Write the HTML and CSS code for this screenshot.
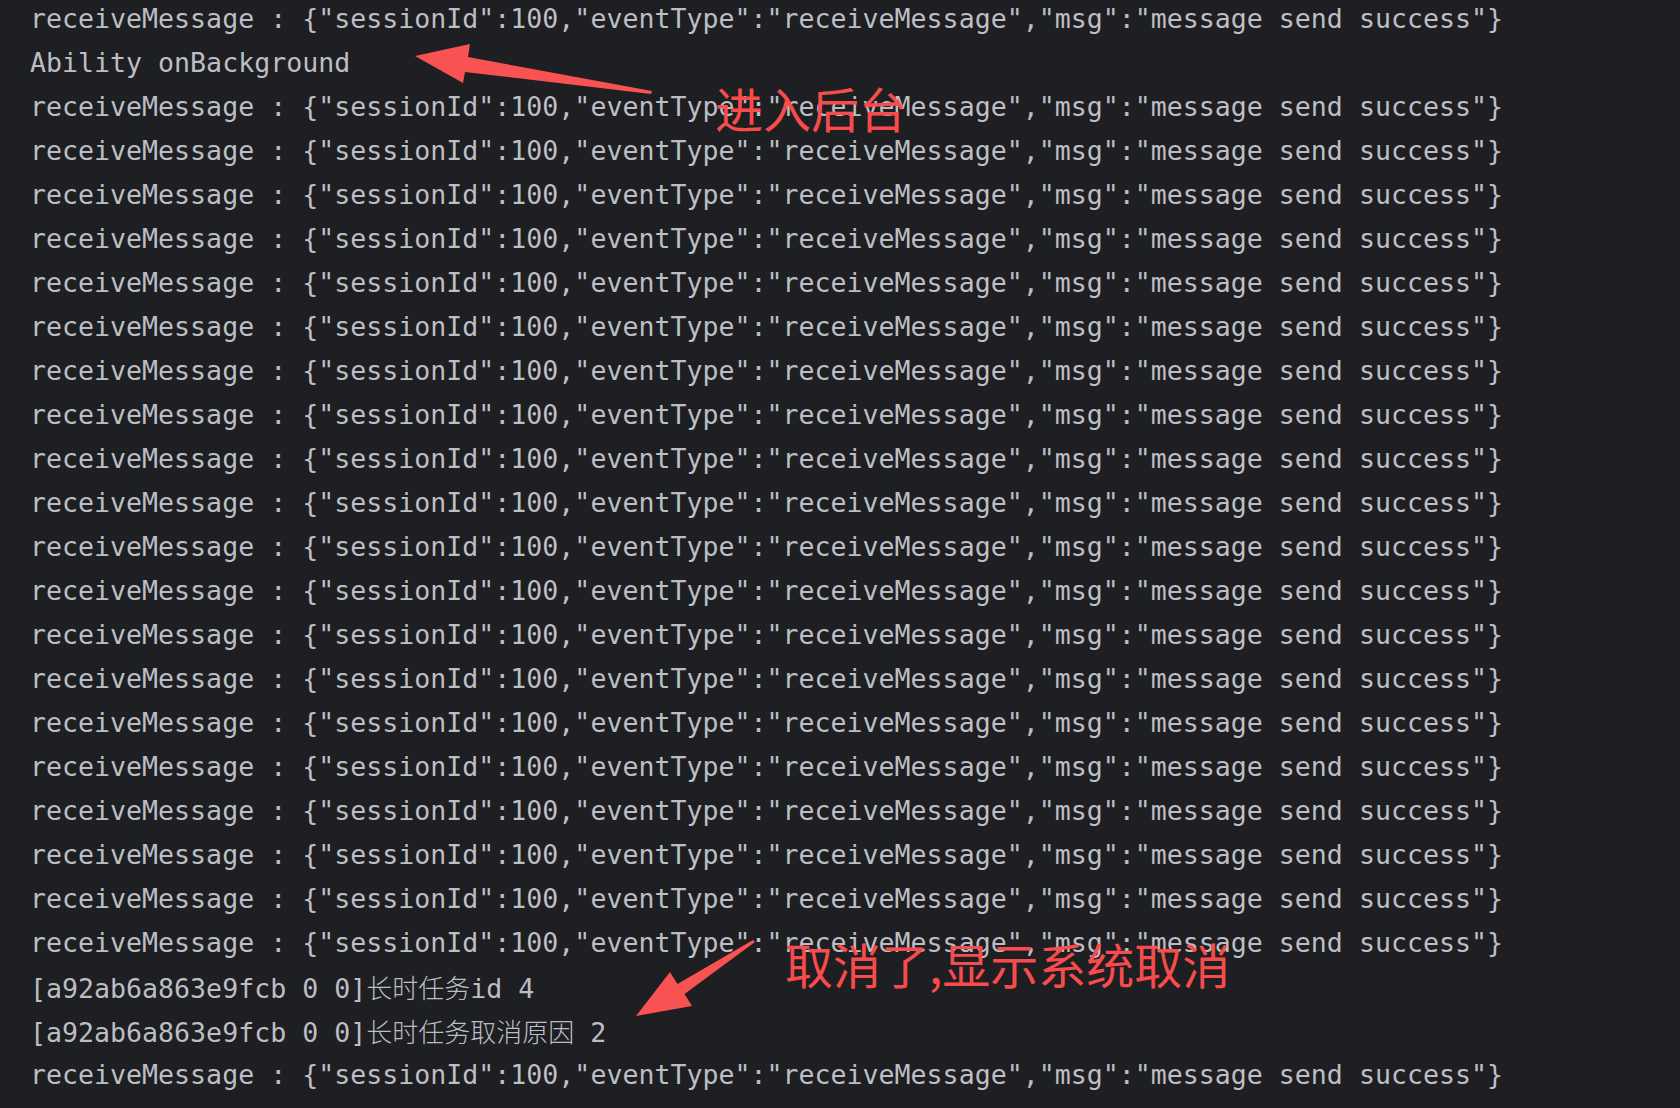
FILE: index.html
```html
<!DOCTYPE html>
<html lang="zh-CN">
<head>
<meta charset="utf-8">
<title>Log</title>
<link rel="stylesheet" href="styles.css">
</head>
<body>
<div class="console">
  <div class="log">
    <div class="line">receiveMessage : {"sessionId":100,"eventType":"receiveMessage","msg":"message send success"}</div>
    <div class="line">Ability onBackground</div>
    <div class="line">receiveMessage : {"sessionId":100,"eventType":"receiveMessage","msg":"message send success"}</div>
    <div class="line">receiveMessage : {"sessionId":100,"eventType":"receiveMessage","msg":"message send success"}</div>
    <div class="line">receiveMessage : {"sessionId":100,"eventType":"receiveMessage","msg":"message send success"}</div>
    <div class="line">receiveMessage : {"sessionId":100,"eventType":"receiveMessage","msg":"message send success"}</div>
    <div class="line">receiveMessage : {"sessionId":100,"eventType":"receiveMessage","msg":"message send success"}</div>
    <div class="line">receiveMessage : {"sessionId":100,"eventType":"receiveMessage","msg":"message send success"}</div>
    <div class="line">receiveMessage : {"sessionId":100,"eventType":"receiveMessage","msg":"message send success"}</div>
    <div class="line">receiveMessage : {"sessionId":100,"eventType":"receiveMessage","msg":"message send success"}</div>
    <div class="line">receiveMessage : {"sessionId":100,"eventType":"receiveMessage","msg":"message send success"}</div>
    <div class="line">receiveMessage : {"sessionId":100,"eventType":"receiveMessage","msg":"message send success"}</div>
    <div class="line">receiveMessage : {"sessionId":100,"eventType":"receiveMessage","msg":"message send success"}</div>
    <div class="line">receiveMessage : {"sessionId":100,"eventType":"receiveMessage","msg":"message send success"}</div>
    <div class="line">receiveMessage : {"sessionId":100,"eventType":"receiveMessage","msg":"message send success"}</div>
    <div class="line">receiveMessage : {"sessionId":100,"eventType":"receiveMessage","msg":"message send success"}</div>
    <div class="line">receiveMessage : {"sessionId":100,"eventType":"receiveMessage","msg":"message send success"}</div>
    <div class="line">receiveMessage : {"sessionId":100,"eventType":"receiveMessage","msg":"message send success"}</div>
    <div class="line">receiveMessage : {"sessionId":100,"eventType":"receiveMessage","msg":"message send success"}</div>
    <div class="line">receiveMessage : {"sessionId":100,"eventType":"receiveMessage","msg":"message send success"}</div>
    <div class="line">receiveMessage : {"sessionId":100,"eventType":"receiveMessage","msg":"message send success"}</div>
    <div class="line">receiveMessage : {"sessionId":100,"eventType":"receiveMessage","msg":"message send success"}</div>
    <div class="line">[a92ab6a863e9fcb 0 0]<span class="cjk">长时任务</span>id 4</div>
    <div class="line">[a92ab6a863e9fcb 0 0]<span class="cjk">长时任务取消原因</span> 2</div>
    <div class="line">receiveMessage : {"sessionId":100,"eventType":"receiveMessage","msg":"message send success"}</div>
  </div>

  <svg class="arrows" width="1680" height="1108" viewBox="0 0 1680 1108" aria-hidden="true">
    <polygon class="arrow" points="415,56 470,44 468,57 652,91 651,94 465,72 463,83"/>
    <polygon class="arrow" points="636,1016 670,972 677.5,984 753,940 755,942 684.5,994 692,1006"/>
  </svg>

  <div class="note note-bg">进入后台</div>
  <div class="note note-cancel">取消了,显示系统取消</div>
</div>
</body>
</html>
```

FILE: styles.css
```css
html, body {
  margin: 0;
  padding: 0;
  background: #1e1f22;
}

body {
  width: 1680px;
  height: 1108px;
  overflow: hidden;
}

.console {
  position: relative;
  width: 1680px;
  height: 1108px;
  background: #1e1f22;
  overflow: hidden;
}

.log {
  margin-top: -3px;
  padding-left: 30px;
  font-family: "DejaVu Sans Mono", "Liberation Mono", "Noto Sans CJK SC", monospace;
  font-size: 26.6px;
  color: #bcbec4;
}

.line {
  height: 44px;
  line-height: 44px;
  white-space: pre;
}

.cjk {
  font-family: "Noto Sans CJK SC", sans-serif;
  font-size: 26px;
  font-weight: 300;
  color: #bcbec4;
}

.arrows {
  position: absolute;
  left: 0;
  top: 0;
  pointer-events: none;
}

.arrow {
  fill: #f95252;
}

.note {
  position: absolute;
  font-family: "Noto Sans CJK SC", sans-serif;
  font-size: 48px;
  line-height: 48px;
  color: #f84c4c;
  white-space: nowrap;
}

.note-bg {
  left: 715px;
  top: 83px;
}

.note-cancel {
  left: 785px;
  top: 939px;
}
```
